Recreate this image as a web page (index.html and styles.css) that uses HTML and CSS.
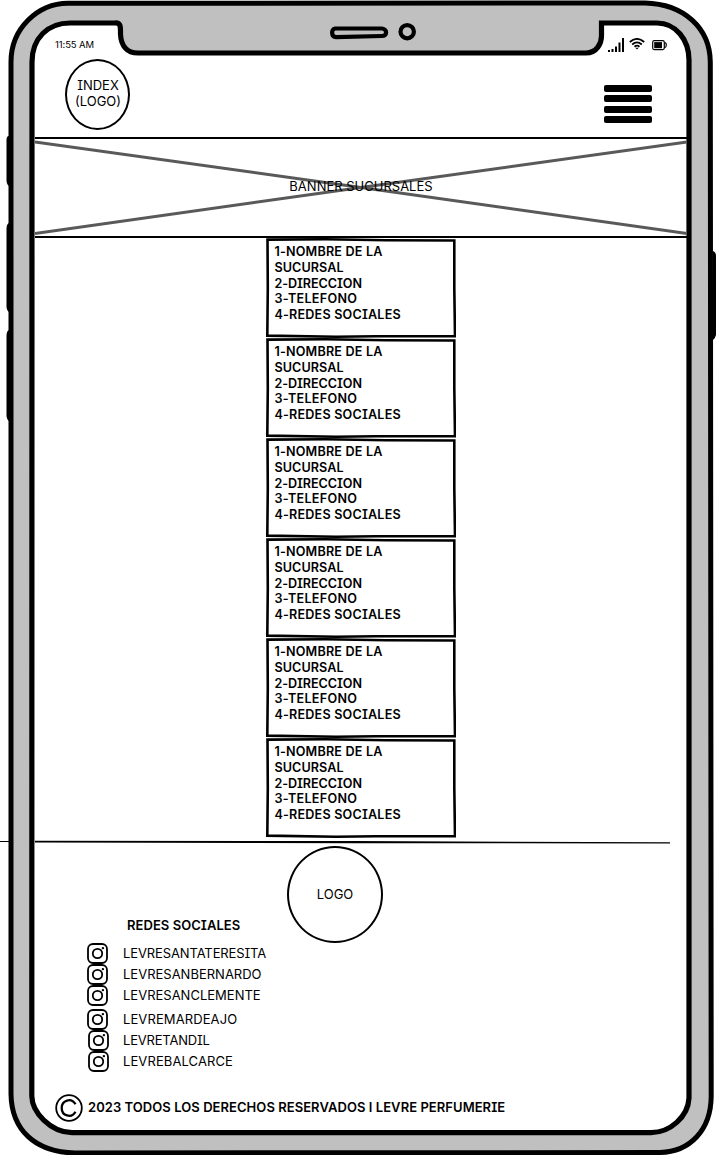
FILE: index.html
```html
<!DOCTYPE html>
<html lang="es">
<head>
<meta charset="utf-8">
<title>Sucursales</title>
<link rel="stylesheet" href="styles.css">
</head>
<body>
<div class="phone">
  <svg class="frame" width="716" height="1155" viewBox="0 0 716 1155" aria-hidden="true">
    <path class="hair" d="M0 841.5H12"/>
    <path class="button" d="M9 136Q6.5 136 6.5 140V181Q7 185 9 186ZM9 223Q6.500 224 6.500 229V307Q7 311 9 312ZM9 330Q6.500 331 6.500 336V416Q7 420 9 421ZM713 251Q716 252 716 256V335Q715 339 713 340Z"/>
    <path class="shell" d="M11 62C11 28 38 3.500 68 3.200L645 3C684 4 710 28 710.300 62L711.200 1096C711 1130 690 1152 660 1152.500L75 1153C35 1152 11.500 1130 11 1094Z"/>
    <path class="screen-edge" d="M32 62C32 38 48 23 70 23H115C121 22.500 120.500 27 120.500 34C121 46 127 53 138 53H586C597 53 601.500 43 601.500 36V23H657C676 23 689 40 689 60V1098C688 1117 670 1132.500 651 1132.700H72C50 1132 32 1112 31.800 1096Z"/>
    <path class="speaker" d="M335 28.500L382 28.500C387.500 29 387.500 36 382 36L336 37.200C331 37 331 29 335 28.500Z"/>
    <ellipse class="speaker" cx="407.200" cy="31.700" rx="6.700" ry="6.600"/>
  </svg>

  <header class="top">
    <div class="status">
      <span class="time">11:55 AM</span>
      <span class="indicators">
        <svg width="17" height="15" viewBox="0 0 17 15"><path d="M0 12H2V14H0ZM3.500 11H5.500V14H3.500ZM7 8.500H9V14H7ZM10.500 4.500H12.500V14H10.500ZM14 0H16V14H14Z"/></svg>
        <svg width="16" height="12" viewBox="0 0 16 12"><g class="waves"><path d="M.8 4Q8-2.200 15.200 4"/><path d="M3.200 6.500Q8 2.300 12.800 6.500"/><path d="M5.500 8.700Q8 6.600 10.500 8.700"/></g><path d="M6.300 9.700H9.700L8 11.500Z"/></svg>
        <svg width="15" height="11" viewBox="0 0 15 11"><rect class="cell" x=".7" y=".7" width="11.600" height="8.900" rx="1.500"/><path d="M2.200 2.100H10V8.200H2.200Z"/><path class="cell" d="M12.500 2.500Q14.300 2.500 14.300 5T12.500 8"/></svg>
      </span>
    </div>
    <div class="bar">
      <a class="logo-small">INDEX<br>(LOGO)</a>
      <div class="menu"><i></i><i></i><i></i><i></i></div>
    </div>
  </header>

  <section class="banner">
    <svg class="cross" width="652" height="96" viewBox="0 0 652 96" aria-hidden="true"><path d="M0 3L326 48.500L652 94.500M0 94.500L326 48.500L652 3"/></svg>
    <span class="banner-title">BANNER SUCURSALES</span>
  </section>

  <main class="branches">
    <article class="branch"><svg class="outline" viewBox="0 0 190 100"><use href="#card"/></svg><p class="name">1-NOMBRE DE LA</p><p class="name-end">SUCURSAL</p><p class="address">2-DIRECCION</p><p class="phone-no">3-TELEFONO</p><p class="nets">4-REDES SOCIALES</p></article>
    <article class="branch"><svg class="outline" viewBox="0 0 190 100"><use href="#card"/></svg><p class="name">1-NOMBRE DE LA</p><p class="name-end">SUCURSAL</p><p class="address">2-DIRECCION</p><p class="phone-no">3-TELEFONO</p><p class="nets">4-REDES SOCIALES</p></article>
    <article class="branch"><svg class="outline" viewBox="0 0 190 100"><use href="#card"/></svg><p class="name">1-NOMBRE DE LA</p><p class="name-end">SUCURSAL</p><p class="address">2-DIRECCION</p><p class="phone-no">3-TELEFONO</p><p class="nets">4-REDES SOCIALES</p></article>
    <article class="branch"><svg class="outline" viewBox="0 0 190 100"><use href="#card"/></svg><p class="name">1-NOMBRE DE LA</p><p class="name-end">SUCURSAL</p><p class="address">2-DIRECCION</p><p class="phone-no">3-TELEFONO</p><p class="nets">4-REDES SOCIALES</p></article>
    <article class="branch"><svg class="outline" viewBox="0 0 190 100"><use href="#card"/></svg><p class="name">1-NOMBRE DE LA</p><p class="name-end">SUCURSAL</p><p class="address">2-DIRECCION</p><p class="phone-no">3-TELEFONO</p><p class="nets">4-REDES SOCIALES</p></article>
    <article class="branch"><svg class="outline" viewBox="0 0 190 100"><use href="#card"/></svg><p class="name">1-NOMBRE DE LA</p><p class="name-end">SUCURSAL</p><p class="address">2-DIRECCION</p><p class="phone-no">3-TELEFONO</p><p class="nets">4-REDES SOCIALES</p></article>
  </main>

  <footer class="footer">
    <svg class="rule" width="636" height="4" viewBox="0 0 636 4"><path d="M0 .7L320 1.100L635 2.300V3.500L320 3.200L0 2.500Z"/></svg>
    <div class="footer-main">
      <div class="social">
        <h2>REDES SOCIALES</h2>
        <ul>
          <li><svg class="insta"><use href="#ig"/></svg><span class="snug">LEVRESANTATERESITA</span></li>
          <li><svg class="insta"><use href="#ig"/></svg><span>LEVRESANBERNARDO</span></li>
          <li><svg class="insta"><use href="#ig"/></svg><span>LEVRESANCLEMENTE</span></li>
          <li class="spaced"><svg class="insta"><use href="#ig"/></svg><span class="wide">LEVREMARDEAJO</span></li>
          <li class="shift"><svg class="insta"><use href="#ig"/></svg><span class="tight">LEVRETANDIL</span></li>
          <li class="shift"><svg class="insta"><use href="#ig"/></svg><span class="wide">LEVREBALCARCE</span></li>
        </ul>
      </div>
      <div class="logo-big">LOGO</div>
    </div>
    <div class="legal">
      <svg width="28" height="28" viewBox="0 0 28 28"><circle cx="14" cy="14" r="12.800"/><path class="c" d="M20.500 10.300C16.500 3.300 6.700 6 6.700 14S16.500 24.700 20.500 17.700"/></svg>
      <span>2023 TODOS LOS DERECHOS RESERVADOS <b>I</b> LEVRE PERFUMERIE</span>
    </div>
  </footer>
</div>
<svg class="defs" width="0" height="0">
  <symbol id="ig" viewBox="0 0 21 21"><rect x="1" y="1" width="19" height="19" rx="5"/><circle cx="10.500" cy="10.500" r="4.700"/><circle class="dot" cx="15.900" cy="5.100" r="1.200"/></symbol>
  <symbol id="card" viewBox="0 0 190 100"><path d="M1.500 1.600L60 1.300L120 2.200L188.300 2.500L188.300 50L189 98.300L110 98.200L70 98.700L1.300 97.600L1.800 50Z"/></symbol>
</svg>
</body>
</html>
```
FILE: styles.css
```css
* { box-sizing: border-box; }
body {
  margin: 0;
  background: #fff;
  color: #000;
  font: 13px/16px Inter, "Liberation Sans", sans-serif;
  font-feature-settings: "cv08" 1;
}
.phone {
  position: relative;
  width: 716px;
  height: 1155px;
  padding: 26px 29px 0 35px;
  overflow: hidden;
}
.frame { position: absolute; left: 0; top: 0; z-index: -1; }
.hair { stroke: #000; stroke-width: 1; }
.shell { fill: #c0c0c0; stroke: #000; stroke-width: 5; }
.screen-edge { fill: #fff; stroke: #000; stroke-width: 5.200; }
.speaker { fill: #c0c0c0; stroke: #000; stroke-width: 4.200; }

.top { height: 111px; }
.status { display: flex; justify-content: space-between; padding: 12px 20px 0 20px; height: 33px; }
.time { font-size: 9.500px; line-height: 14px; letter-spacing: -.1px; }
.indicators { display: flex; gap: 5px; }
.indicators svg:first-child { margin-right: -1px; }
.indicators svg:last-child { margin: 2px 0 0 2px; }
.waves, .cell { fill: none; stroke: #000; }
.waves { stroke-width: 1.800; }
.cell { stroke-width: 1.200; }
.bar { display: flex; justify-content: space-between; padding: 0 35px 0 30px; }
.logo-small {
  width: 65px;
  height: 71px;
  padding: 16px 0 0 1px;
  border: 2px solid #000;
  border-radius: 50%;
  text-align: center;
}
.menu { display: grid; gap: 3.500px; align-content: start; padding-top: 26px; }
.menu i { width: 48px; height: 6.900px; border-radius: 2px; background: #000; }

.banner {
  position: relative;
  display: flex;
  justify-content: center;
  align-items: center;
  height: 101px;
  padding-bottom: 3px;
  border-top: 2px solid #000;
  border-bottom: 2px solid #000;
}
.cross { position: absolute; left: 0; top: 0; z-index: -1; }
.cross path { fill: none; stroke: #595959; stroke-width: 3; }

.branches { display: grid; grid-auto-rows: 100px; justify-content: center; }
.branch { position: relative; width: 190px; padding: 6px 0 0 8.400px; }
.outline { position: absolute; left: 0; top: 0; width: 190px; height: 100px; }
#card path { fill: none; stroke: #000; stroke-width: 2.600; }
.branch p { margin: 0; font-size: 12.600px; font-weight: 600; line-height: 15.750px; }
.branch .name { letter-spacing: .2px; }
.branch .name-end { letter-spacing: .1px; }
.branch .address { letter-spacing: -.05px; }
.branch .phone-no { letter-spacing: .3px; }
.branch .nets { letter-spacing: .2px; }

.rule { display: block; margin-top: 2px; }
.footer-main { display: flex; padding-left: 52px; }
.social { width: 201px; padding-top: 73px; }
.social h2 { margin: 0 0 10px 40px; font-size: 13px; line-height: 16px; font-weight: 600; letter-spacing: .05px; }
.social ul { margin: 0; padding: 0; list-style: none; }
.social li { display: flex; gap: 15px; height: 21px; align-items: center; }
.social li span { line-height: 16px; padding-bottom: 2px; }
.snug { letter-spacing: -.12px; }
.wide { letter-spacing: .1px; }
.tight { letter-spacing: -.2px; }
.spaced { margin-top: 3px; }
.shift .insta { margin: 0 -1px 0 1px; }
.insta { width: 21px; height: 21px; fill: none; stroke: #000; stroke-width: 1.800; }
.dot { fill: #000; stroke: none; }
.logo-big {
  width: 96px;
  height: 97px;
  margin: 2px 0 0 -1px;
  border: 2px solid #000;
  border-radius: 50%;
  line-height: 92px;
  text-align: center;
}
.legal { display: flex; align-items: center; gap: 5px; padding: 22px 0 0 20px; font-weight: 600; letter-spacing: .055px; }
.legal span { padding-bottom: 2px; }
.legal svg { fill: none; stroke: #000; stroke-width: 1.800; }
.legal .c { stroke-width: 2.300; }
.legal b { font-weight: 600; font-feature-settings: normal; }
.defs { position: absolute; }
```
